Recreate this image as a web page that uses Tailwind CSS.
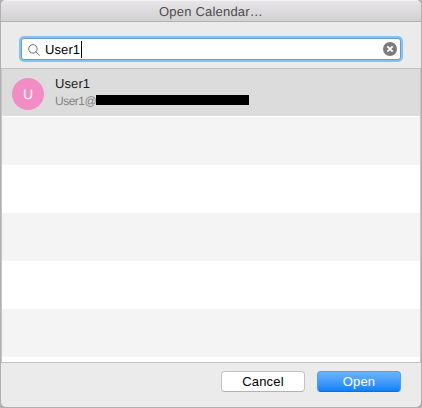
<!DOCTYPE html>
<html lang="en">
<head>
<meta charset="utf-8">
<title>Open Calendar…</title>
<script src="https://cdn.jsdelivr.net/npm/@tailwindcss/browser@4"></script>
</head>
<body class="w-[422px] h-[408px] overflow-hidden bg-[#b0b0b0] px-px pb-px font-['Liberation_Sans',Arial,sans-serif] text-[13px] leading-4 text-[#1c1c1c] [text-rendering:geometricPrecision]">
<div class="flex h-[407px] flex-col overflow-hidden rounded-[5px] bg-[#ebebeb]">
  <header class="flex h-[22px] shrink-0 justify-center border-b border-[#b2b2b2] border-t border-t-[#f4f2f4] bg-linear-to-b from-[#e8e5e8] to-[#d2d1d2] pt-[3px] text-[#4c494c]">
    <h1 class="tracking-[0.2px]">Open Calendar…</h1>
  </header>
  <div class="h-[47px] shrink-0 border-b border-[#c2c2c2] pt-[16px] pl-[20px]">
    <div class="flex h-[22px] w-[380px] items-center rounded-[3px] border border-[#6a9dca] bg-white pl-[6px] pr-[3px] ring-2 ring-[#89c0f2]">
      <svg class="mt-px size-[12px]" viewBox="0 0 12 12" fill="none" stroke="#6b6b6b" stroke-width="1"><circle cx="4.9" cy="4.9" r="4.2"/><path d="M8 8 11.4 11.2" stroke-linecap="round"/></svg>
      <span class="ml-[5px] w-[36px] pt-px tracking-[0.1px] text-black">User1</span>
      <span class="mt-px h-[17px] w-px bg-black"></span>
      <svg class="ml-auto size-[14px]" viewBox="0 0 14 14"><circle cx="7" cy="7" r="7" fill="#7b7b7b"/><path d="M4.3 4.3 9.7 9.7M9.7 4.3 4.3 9.7" stroke="#fff" stroke-width="1.8"/></svg>
    </div>
  </div>
  <main class="flex h-[293px] shrink-0 flex-col border-x border-[#c6c6c6] bg-white">
    <div class="flex h-[47px] shrink-0 bg-[#dcdcdc] pl-[10px]">
      <div class="mt-[9px] flex size-8 items-center justify-center rounded-full bg-[#f28cc4] text-[14px] text-white">U</div>
      <div class="ml-[11px] pt-[7px]">
        <div class="tracking-[0.1px] text-[#1c1c1c]">User1</div>
        <div class="mt-px flex h-[14px] items-center text-[12px] leading-[14px] tracking-[-0.5px] text-[#858585]"><span class="w-[41px] pt-px">User1@</span><span class="h-[10px] w-[153px] bg-black"></span></div>
      </div>
    </div>
    <div class="mt-px h-12 shrink-0 bg-[#f4f4f4]"></div>
    <div class="h-12 shrink-0"></div>
    <div class="h-12 shrink-0 bg-[#f4f4f4]"></div>
    <div class="h-12 shrink-0"></div>
    <div class="h-12 shrink-0 bg-[#f4f4f4]"></div>
  </main>
  <footer class="flex flex-1 justify-end gap-[12px] border-t border-[#c2c2c2] pt-[8px] pr-[20px]">
    <button class="h-[21px] w-[84px] rounded-[4px] border border-[#c3c3c3] border-b-[#b2b2b2] bg-white tracking-[0.2px] text-black">Cancel</button>
    <button class="h-[21px] w-[84px] rounded-[4px] border border-[#4a9ff0] border-b-[#0a70e0] bg-linear-to-b from-[#6bb3f9] to-[#0582fb] tracking-[0.2px] text-white">Open</button>
  </footer>
</div>
</body>
</html>
